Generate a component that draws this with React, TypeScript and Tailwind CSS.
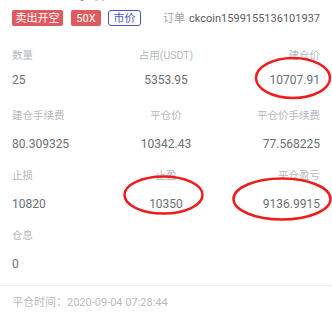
const font = { fontFamily: "Roboto, 'Noto Sans CJK SC', sans-serif" }

type Cell = { label: string; value: string }

const ROWS: { cells: Cell[]; gap: string }[] = [
  {
    gap: 'mt-[6px]',
    cells: [
      { label: '数量', value: '25' },
      { label: '占用(USDT)', value: '5353.95' },
      { label: '建仓价', value: '10707.91' },
    ],
  },
  {
    gap: 'mt-[10px]',
    cells: [
      { label: '建仓手续费', value: '80.309325' },
      { label: '平仓价', value: '10342.43' },
      { label: '平仓价手续费', value: '77.568225' },
    ],
  },
  {
    gap: 'mt-[10px]',
    cells: [
      { label: '止损', value: '10820' },
      { label: '止盈', value: '10350' },
      { label: '平仓盈亏', value: '9136.9915' },
    ],
  },
  {
    gap: 'mt-[10px]',
    cells: [{ label: '仓息', value: '0' }],
  },
]

const ALIGN = ['text-left', 'text-center', 'text-right']

export default function App() {
  return (
    <div className="relative w-[332px] h-[317px] overflow-hidden bg-white" style={font}>
      {/* cut-off title */}
      <div className="px-3 -mt-[16px] h-[20px] text-[14px] leading-[20px] text-[#9a9ca2] whitespace-nowrap">
        BTC 1000 永续
      </div>

      {/* tags + order id */}
      <div className="flex items-center px-3 mt-[6px] h-[16px] whitespace-nowrap">
        <span className="shrink-0 h-[16px] w-[51px] flex items-center justify-center rounded-[2px] bg-[#df5a5f] text-white text-[11px] leading-none">
          卖出开空
        </span>
        <span className="shrink-0 ml-[8px] h-[16px] w-[30px] flex items-center justify-center rounded-[2px] bg-[#df5a5f] text-white text-[11px] leading-none">
          50X
        </span>
        <span className="shrink-0 ml-[7px] h-[16px] w-[33px] flex items-center justify-center rounded-[3px] border border-[#4753c2] text-[#4753c2] text-[11px] leading-none">
          市价
        </span>
        <span className="ml-auto text-[11px] leading-none">
          <span className="text-[#9ea0a6]">订单</span>
          <span className="ml-[4px] text-[#5a5d64]">ckcoin1599155136101937</span>
        </span>
      </div>

      {/* info grid */}
      <div className="px-3 mt-[21px]">
        {ROWS.map((row, ri) => (
          <div key={ri} className="grid grid-cols-3 h-[60px]">
            {row.cells.map((c, ci) => (
              <div key={ci} className={ALIGN[ci]}>
                <div className="text-[10.5px] leading-[18px] text-[#b5b7bc]">{c.label}</div>
                <div className={`${row.gap} text-[12px] leading-[18px] text-[#6c6f76]`}>{c.value}</div>
              </div>
            ))}
          </div>
        ))}
      </div>

      <div className="-mt-[2px] h-px bg-[#f1f1f3]" />

      <div className="px-3 mt-[8px] text-[11px] leading-[18px] text-[#b9bbc0]">
        平仓时间：2020-09-04 07:28:44
      </div>

      {/* red annotation circles */}
      <svg className="absolute inset-0 pointer-events-none" width="332" height="317">
        <ellipse cx="293" cy="78" rx="37" ry="20" fill="none" stroke="#ee1c1c" strokeWidth="2.5" />
        <ellipse cx="163.5" cy="195" rx="39" ry="18.5" fill="none" stroke="#ee1c1c" strokeWidth="2.5" />
        <ellipse cx="282" cy="199" rx="48.5" ry="20.5" fill="none" stroke="#ee1c1c" strokeWidth="2.5" />
      </svg>
    </div>
  )
}
